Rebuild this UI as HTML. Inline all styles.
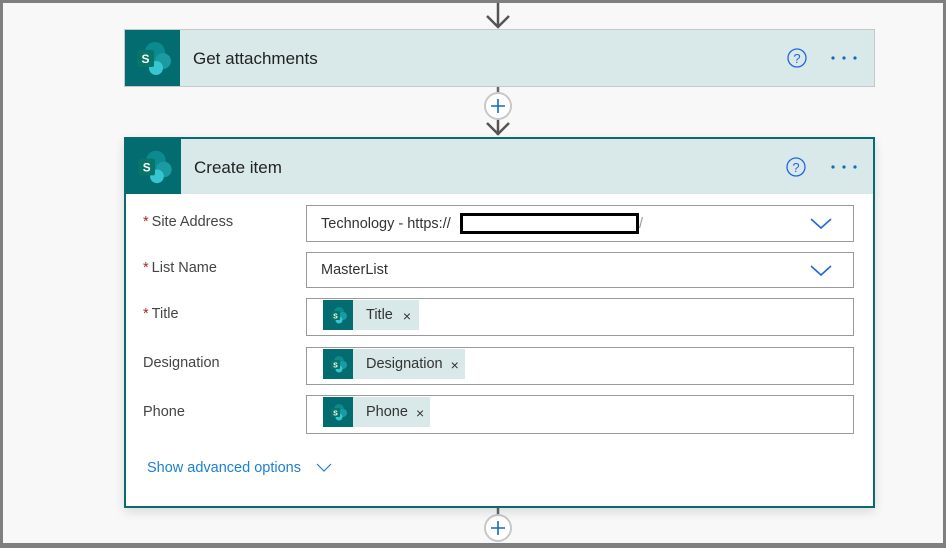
<!DOCTYPE html>
<html><head><meta charset="utf-8"><style>
*{margin:0;padding:0;box-sizing:border-box}
body{width:946px;height:548px;overflow:hidden;background:#7f7f7f;font-family:"Liberation Sans",sans-serif;position:relative}
.canvas{position:absolute;left:3px;top:3px;width:940px;height:540px;background:#f8f8f8}
.abs{position:absolute}
.card1{left:124px;top:29px;width:751px;height:58px;border:1px solid #c8c8c8;background:#d9e8e8}
.card2{left:124px;top:137px;width:751px;height:371px;border:2px solid #0b6a6f;background:#fff;box-shadow:0 4px 10px rgba(0,0,0,.12)}
.hdr{position:absolute;left:0;top:0;right:0;background:#d9e8e8}
.ico{position:absolute;left:0;top:0;width:55px;background:#036c70}
.title{position:absolute;font-size:17px;color:#222}
.lbl{position:absolute;left:17px;font-size:14.5px;color:#444}
.lbl b{color:#a4262c;font-weight:normal;margin-right:3px}
.inp{position:absolute;left:180px;width:548px;border:1px solid #9a9a9a;font-size:14.5px;color:#333}
.chip{position:absolute;left:16px;top:1px;height:30px;background:#d9e8e8;display:flex;align-items:center;font-size:14.5px;color:#333}
.chip .ci{width:30px;height:30px;background:#036c70;display:flex;align-items:center;justify-content:center;margin-right:13px}
</style></head><body>
<div class="canvas"></div>
<svg class="abs" style="left:0;top:0" width="946" height="548">
<line x1="498" y1="3" x2="498" y2="26" stroke="#555" stroke-width="2.5"/>
<polyline points="487,16 498,27 509,16" fill="none" stroke="#555" stroke-width="2.5"/>
<line x1="498" y1="87" x2="498" y2="94" stroke="#666" stroke-width="2.5"/>
<line x1="498" y1="119" x2="498" y2="135" stroke="#555" stroke-width="2.5"/>
<polyline points="487,123 498,134 509,123" fill="none" stroke="#555" stroke-width="2.5"/>
<line x1="498" y1="508" x2="498" y2="515" stroke="#666" stroke-width="2.5"/>
<circle cx="498" cy="106" r="13" fill="#fff" stroke="#c8c8c8" stroke-width="2"/>
<path d="M498 99v14M491 106h14" stroke="#0f6cbd" stroke-width="1.6"/>
<circle cx="498" cy="528" r="13" fill="#fff" stroke="#c8c8c8" stroke-width="2"/>
<path d="M498 521v14M491 528h14" stroke="#0f6cbd" stroke-width="1.6"/>
</svg>

<div class="abs card1">
 <div class="ico" style="height:56px"><svg width="55" height="56" viewBox="0 0 55 56"><circle cx="30" cy="22" r="10" fill="#0b8a8f"/><circle cx="38" cy="31" r="8" fill="#1a9ba1"/><circle cx="31" cy="38" r="7" fill="#37c6d0"/><rect x="12" y="20" width="17" height="17" rx="2" fill="#077568"/><text x="20.5" y="33" font-size="12" font-weight="bold" fill="#fff" text-anchor="middle" font-family="Liberation Sans">S</text></svg></div>
 <div class="title" style="left:68px;top:19px">Get attachments</div>
 <svg class="abs" style="left:661px;top:17px" width="80" height="24"><circle cx="11" cy="11" r="9" fill="none" stroke="#2266e0" stroke-width="1.3"/><text x="11" y="16" font-size="13" fill="#2266e0" text-anchor="middle" font-family="Liberation Sans">?</text><circle cx="47" cy="11" r="1.6" fill="#0f6cbd"/><circle cx="58" cy="11" r="1.6" fill="#0f6cbd"/><circle cx="69" cy="11" r="1.6" fill="#0f6cbd"/></svg>
</div>

<div class="abs card2">
 <div class="hdr" style="height:55px">
  <div class="ico" style="height:55px"><svg width="55" height="55" viewBox="0 0 55 56"><circle cx="30" cy="22" r="10" fill="#0b8a8f"/><circle cx="38" cy="31" r="8" fill="#1a9ba1"/><circle cx="31" cy="38" r="7" fill="#37c6d0"/><rect x="12" y="20" width="17" height="17" rx="2" fill="#077568"/><text x="20.5" y="33" font-size="12" font-weight="bold" fill="#fff" text-anchor="middle" font-family="Liberation Sans">S</text></svg></div>
  <div class="title" style="left:68px;top:19px">Create item</div>
  <svg class="abs" style="left:659px;top:17px" width="80" height="24"><circle cx="11" cy="11" r="9" fill="none" stroke="#2266e0" stroke-width="1.3"/><text x="11" y="16" font-size="13" fill="#2266e0" text-anchor="middle" font-family="Liberation Sans">?</text><circle cx="48" cy="11" r="1.6" fill="#0f6cbd"/><circle cx="59" cy="11" r="1.6" fill="#0f6cbd"/><circle cx="70" cy="11" r="1.6" fill="#0f6cbd"/></svg>
 </div>
 <div class="lbl" style="top:75px"><b>*</b>Site Address</div>
 <div class="lbl" style="top:121px"><b>*</b>List Name</div>
 <div class="lbl" style="top:167px"><b>*</b>Title</div>
 <div class="lbl" style="top:216px">Designation</div>
 <div class="lbl" style="top:265px">Phone</div>

 <div class="inp" style="top:66px;height:37px"><span class="abs" style="left:14px;top:10px">Technology - https://</span><div class="abs" style="left:153px;top:7px;width:179px;height:21px;border:3.5px solid #000;background:#fff"></div><span class="abs" style="left:332px;top:10px;color:#999">/</span><svg class="abs" style="left:502px;top:11px" width="24" height="14"><polyline points="2,2 12,11 22,2" fill="none" stroke="#2266e0" stroke-width="1.6"/></svg></div>
 <div class="inp" style="top:113px;height:36px"><span class="abs" style="left:14px;top:9px">MasterList</span><svg class="abs" style="left:502px;top:11px" width="24" height="14"><polyline points="2,2 12,11 22,2" fill="none" stroke="#2266e0" stroke-width="1.6"/></svg></div>
 <div class="inp" style="top:159px;height:38px"><div class="chip"><div class="ci"><svg width="20" height="20" viewBox="0 0 20 20"><circle cx="11" cy="7" r="5" fill="#0b8a8f"/><circle cx="15" cy="11" r="4" fill="#1a9ba1"/><circle cx="11" cy="15" r="3.5" fill="#37c6d0"/><rect x="3" y="6" width="9" height="9" rx="1" fill="#077568"/><text x="7.5" y="13.5" font-size="7" font-weight="bold" fill="#fff" text-anchor="middle" font-family="Liberation Sans">S</text></svg></div>Title<span style="margin:2px 8px 0 10px;font-size:14px">×</span></div></div>
 <div class="inp" style="top:208px;height:38px"><div class="chip"><div class="ci"><svg width="20" height="20" viewBox="0 0 20 20"><circle cx="11" cy="7" r="5" fill="#0b8a8f"/><circle cx="15" cy="11" r="4" fill="#1a9ba1"/><circle cx="11" cy="15" r="3.5" fill="#37c6d0"/><rect x="3" y="6" width="9" height="9" rx="1" fill="#077568"/><text x="7.5" y="13.5" font-size="7" font-weight="bold" fill="#fff" text-anchor="middle" font-family="Liberation Sans">S</text></svg></div>Designation<span style="margin:2px 6px 0 8px;font-size:14px">×</span></div></div>
 <div class="inp" style="top:256px;height:39px"><div class="chip"><div class="ci"><svg width="20" height="20" viewBox="0 0 20 20"><circle cx="11" cy="7" r="5" fill="#0b8a8f"/><circle cx="15" cy="11" r="4" fill="#1a9ba1"/><circle cx="11" cy="15" r="3.5" fill="#37c6d0"/><rect x="3" y="6" width="9" height="9" rx="1" fill="#077568"/><text x="7.5" y="13.5" font-size="7" font-weight="bold" fill="#fff" text-anchor="middle" font-family="Liberation Sans">S</text></svg></div>Phone<span style="margin:2px 6px 0 8px;font-size:14px">×</span></div></div>

 <div class="abs" style="left:21px;top:321px;font-size:14.5px;color:#1b7fd6">Show advanced options</div>
 <svg class="abs" style="left:190px;top:324px" width="16" height="10"><polyline points="1,1 8,8 15,1" fill="none" stroke="#1b7fd6" stroke-width="1.2"/></svg>
</div>
</body></html>
